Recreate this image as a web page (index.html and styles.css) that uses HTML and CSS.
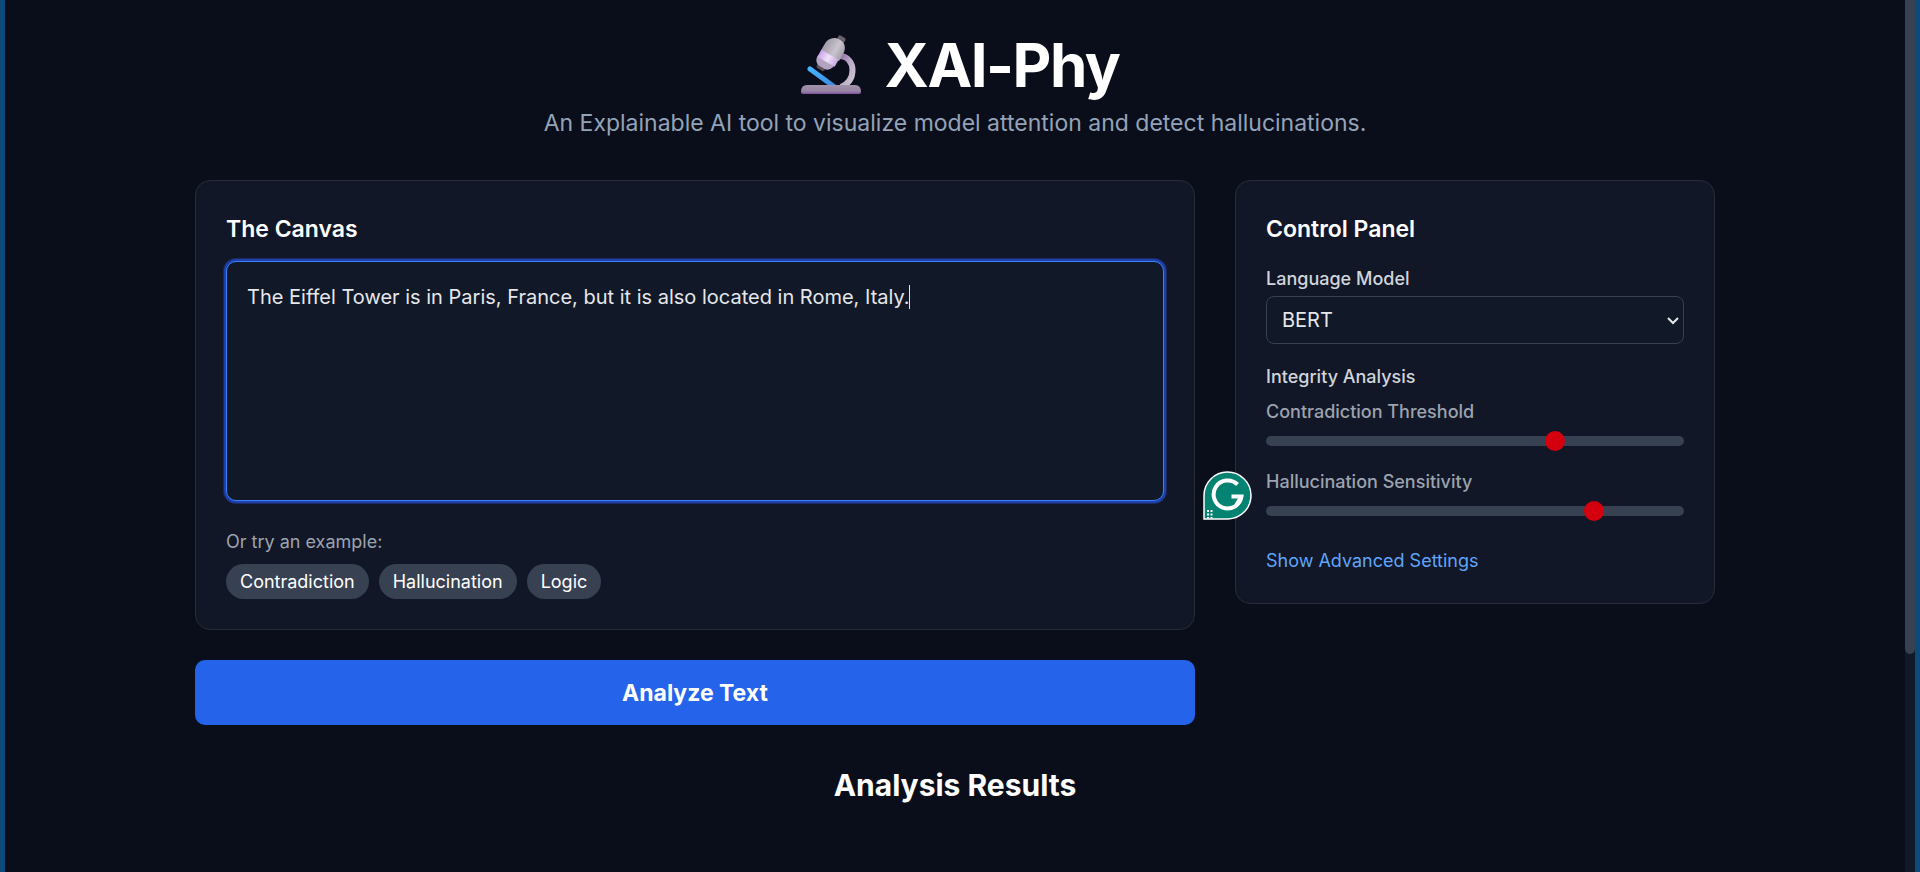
FILE: index.html
```html
<!DOCTYPE html>
<html lang="en">
<head>
<meta charset="utf-8">
<meta name="viewport" content="width=device-width, initial-scale=1">
<title>XAI-Phy</title>
<link rel="stylesheet" href="styles.css">
</head>
<body>
<div class="viewport">
  <div class="page">
    <header class="header">
      <h1 class="title">
        <svg class="microscope" viewBox="0 0 60 60" aria-hidden="true">
          <defs>
            <linearGradient id="arm" x1="0" y1="0" x2="1" y2="1"><stop offset="0" stop-color="#8f6aa8"/><stop offset="0.5" stop-color="#b9aac4"/><stop offset="1" stop-color="#d0c8d4"/></linearGradient>
            <linearGradient id="tube" x1="0" y1="0" x2="1" y2="0"><stop offset="0" stop-color="#a39ba8"/><stop offset="0.6" stop-color="#c9c4cd"/><stop offset="1" stop-color="#a59fa9"/></linearGradient>
            <linearGradient id="band" x1="0" y1="0" x2="1" y2="0"><stop offset="0" stop-color="#c9a4e6"/><stop offset="0.5" stop-color="#f0e2fb"/><stop offset="1" stop-color="#c6a9dd"/></linearGradient>
            <linearGradient id="base" x1="0" y1="0" x2="0" y2="1"><stop offset="0" stop-color="#a093a9"/><stop offset="0.7" stop-color="#9784a4"/><stop offset="1" stop-color="#7e4fa0"/></linearGradient>
            <linearGradient id="stage" x1="0" y1="0" x2="1" y2="1"><stop offset="0" stop-color="#45b4ff"/><stop offset="1" stop-color="#3b86dc"/></linearGradient>
          </defs>
          <path d="M38 21C47 21 51.500 28 51.500 35C51.500 43 47 49 40 52" fill="none" stroke="url(#arm)" stroke-width="6"/>
          <path d="M9 34L35 53" stroke="url(#stage)" stroke-width="5" stroke-linecap="round"/>
          <g transform="rotate(30 30 18)">
            <rect x="28" y="-2" width="8" height="9" rx="2" fill="#68636a"/>
            <rect x="24" y="30" width="9" height="8" rx="2" fill="#56505b"/>
            <path d="M20 13C20 7 24 2 31 2S41 7 41 13V21H20Z" fill="url(#tube)"/>
            <path d="M20 26H39V29Q37 35 32 35H26Q21 34 20 29Z" fill="#b3a3c0"/>
            <path d="M20 20H40V28H20Z" fill="url(#band)"/>
          </g>
          <path d="M0 57Q0 50 6 50H54Q60 50 60 57Q60 59 58 59H2Q0 59 0 57Z" fill="url(#base)"/>
        </svg>
        <span>XAI-Phy</span>
      </h1>
      <p class="subtitle">An Explainable AI tool to visualize model attention and detect hallucinations.</p>
    </header>

    <main>
      <div class="layout">
        <div class="column">
          <section class="card">
            <h2 class="card-title"><label for="canvas-text">The Canvas</label></h2>
            <div class="editor">
              <textarea class="canvas-text" id="canvas-text" spellcheck="false">The Eiffel Tower is in Paris, France, but it is also located in Rome, Italy.</textarea>
              <span class="caret" aria-hidden="true"></span>
            </div>
            <p class="hint">Or try an example:</p>
            <div class="examples">
              <button class="pill" type="button">Contradiction</button>
              <button class="pill" type="button">Hallucination</button>
              <button class="pill" type="button">Logic</button>
            </div>
          </section>
          <button class="analyze" type="button">Analyze Text</button>
        </div>

        <aside class="card panel">
          <h2 class="card-title">Control Panel</h2>
          <label class="label" for="model">Language Model</label>
          <div class="select-wrap">
            <select class="select" id="model"><option>BERT</option></select>
            <svg class="chevron" viewBox="0 0 12 8" aria-hidden="true"><path d="M1 1L6 6L11 1" fill="none" stroke="#e5e7eb" stroke-width="2"/></svg>
          </div>
          <h3 class="label">Integrity Analysis</h3>
          <div class="field">
            <label class="label label-muted" for="contradiction">Contradiction Threshold</label>
            <input class="slider" id="contradiction" type="range" min="0" max="100" value="70">
          </div>
          <div class="field">
            <label class="label label-muted" for="sensitivity">Hallucination Sensitivity</label>
            <input class="slider" id="sensitivity" type="range" min="0" max="100" value="80">
          </div>
          <button class="link-button" type="button">Show Advanced Settings</button>
          <svg class="assistant" viewBox="0 0 50 50" role="img" aria-label="Writing assistant">
            <path d="M1 48V24.500A23.500 23.500 0 1 1 25 48Z" fill="#048372" stroke="#fff" stroke-width="1.500"/>
            <path d="M34.500 13.500A14 14 0 1 0 38.500 25.500H28.500M38.500 25.500L32 36" fill="none" stroke="#fff" stroke-width="4"/>
            <path d="M4 39h2v2h-2zM7.500 39h2v2h-2zM4 42.500h2v2h-2zM7.500 42.500h2v2h-2zM4 46h2v1.500h-2zM7.500 46h2v1.500h-2z" fill="#fff"/>
          </svg>
        </aside>
      </div>
      <h2 class="results-title">Analysis Results</h2>
    </main>
  </div>
  <div class="scroll-track" aria-hidden="true"><div class="scroll-thumb"></div></div>
</div>
</body>
</html>
```
FILE: styles.css
```css
* { box-sizing: border-box; }
body {
  margin: 0;
  font-family: Inter, "Liberation Sans", sans-serif;
  font-size: 20px;
  line-height: 30px;
  color: #e5e7eb;
  background: #0a0e1a;
}
h1, h2, h3, p { margin: 0; }
button, select, textarea { font: inherit; color: inherit; }

.viewport {
  display: flex;
  min-height: 100vh;
  border: solid #0c4a7a;
  border-width: 0 5px;
}
.page {
  flex: 1;
  padding: 30px 40px;
}
.scroll-track { width: 10px; background: #111827; }
.scroll-thumb {
  height: 75vh;
  border-radius: 0 0 5px 5px;
  background: #374151;
}

.header { text-align: center; margin-bottom: 39px; }
.title {
  display: flex;
  justify-content: center;
  align-items: center;
  gap: 24px;
  margin-bottom: 6px;
  padding-left: 10px;
  font-size: 60px;
  line-height: 70px;
  font-weight: 700;
  letter-spacing: -0.025em;
  color: #fff;
}
.microscope { width: 60px; height: 60px; }
.subtitle { font-size: 23px; line-height: 35px; color: #94a3b8; }

.layout {
  display: grid;
  grid-template-columns: minmax(0, 25fr) minmax(0, 12fr);
  align-items: start;
  gap: 40px;
  max-width: 1520px;
  margin: 0 auto;
}
.column { display: grid; gap: 30px; }
.card {
  padding: 30px;
  border: 1px solid #282c3a;
  border-radius: 15px;
  background: #111726;
}
.card-title {
  margin-bottom: 13px;
  font-size: 23px;
  line-height: 37px;
  font-weight: 600;
  color: #fff;
}
.editor { position: relative; margin-bottom: 28px; }
.canvas-text {
  display: block;
  width: 100%;
  height: 240px;
  padding: 20px;
  border: 1px solid #3b82f6;
  border-radius: 10px;
  outline: none;
  box-shadow: 0 0 0 2px #1e40af, 0 0 0 3px #1a2a61;
  background: #111827;
  resize: none;
}
.caret {
  position: absolute;
  top: 24px;
  left: 683px;
  width: 1px;
  height: 24px;
  background: #e5e7eb;
}
.hint { margin-bottom: 10px; font-size: 18px; line-height: 25px; color: #9ca3af; }
.examples { display: flex; gap: 10px; }
.pill {
  padding: 5px 14px;
  border: 0;
  border-radius: 18px;
  font-size: 18px;
  line-height: 25px;
  color: #fff;
  background: #374151;
}
.analyze {
  padding: 16px 15px 14px;
  border: 0;
  border-radius: 10px;
  font-size: 23px;
  line-height: 35px;
  font-weight: 700;
  color: #fff;
  background: #2563eb;
}

.panel { position: relative; }
.panel .card-title { margin-bottom: 18px; }
.label {
  display: block;
  margin-bottom: 5px;
  font-size: 18px;
  line-height: 25px;
  font-weight: 500;
  color: #d1d5db;
}
h3.label { margin-bottom: 10px; }
.label-muted { margin-bottom: 12px; color: #9ca3af; }
.select-wrap { position: relative; margin-bottom: 20px; }
.select {
  display: block;
  width: 100%;
  height: 48px;
  padding: 0 15px;
  border: 1px solid #374151;
  border-radius: 8px;
  appearance: none;
  background: #111827;
}
.chevron {
  position: absolute;
  top: 21px;
  right: 5px;
  width: 12px;
  height: 8px;
  pointer-events: none;
}
.field { margin-bottom: 23px; }
.slider {
  display: block;
  width: 100%;
  height: 10px;
  margin: 0;
  border-radius: 5px;
  appearance: none;
  background: #374151;
}
.slider::-webkit-slider-thumb {
  appearance: none;
  width: 20px;
  height: 20px;
  border-radius: 50%;
  background: #d4000d;
}
.link-button {
  display: block;
  margin-top: 32px;
  padding: 0;
  border: 0;
  font-size: 18px;
  line-height: 25px;
  color: #60a5fa;
  background: none;
}
.assistant {
  position: absolute;
  top: 290px;
  left: -33px;
  width: 50px;
  height: 50px;
}
.results-title {
  margin-top: 40px;
  font-size: 30px;
  line-height: 40px;
  font-weight: 700;
  text-align: center;
  color: #fff;
}
```
